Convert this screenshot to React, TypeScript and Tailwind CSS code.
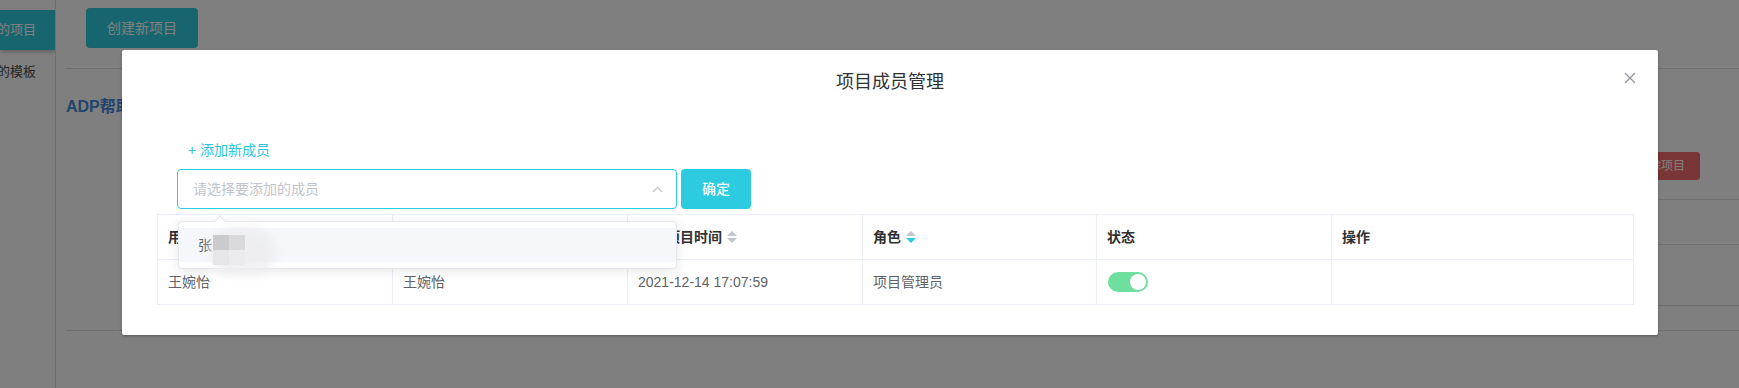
import React from "react";

function SortCaret({ active }: { active?: "up" | "down" }) {
  return (
    <span className="ml-[5px] inline-flex flex-col items-center gap-[2px]">
      <span
        className={
          "h-0 w-0 border-x-[5px] border-b-[5px] border-x-transparent " +
          (active === "up" ? "border-b-[#2ccbdf]" : "border-b-[#c0c4cc]")
        }
      />
      <span
        className={
          "h-0 w-0 border-x-[5px] border-t-[5px] border-x-transparent " +
          (active === "down" ? "border-t-[#2ccbdf]" : "border-t-[#c0c4cc]")
        }
      />
    </span>
  );
}

function HeadCell({ children }: { children: React.ReactNode }) {
  return (
    <div className="flex h-[45px] items-center border-b border-r border-[#ebeef5] pl-[10px] text-[14px] font-bold text-[#303133]">
      {children}
    </div>
  );
}

function BodyCell({ children }: { children?: React.ReactNode }) {
  return (
    <div className="flex h-[45px] items-center border-b border-r border-[#ebeef5] pl-[10px] text-[14px] text-[#606266]">
      {children}
    </div>
  );
}

export default function App() {
  return (
    <div className="relative h-[388px] w-[1739px] overflow-hidden bg-white font-['Liberation_Sans','Noto_Sans_CJK_SC',sans-serif]">
      {/* background page */}
      <div className="flex h-full">
        <aside className="h-full w-[56px] shrink-0 overflow-hidden border-r border-[#dcdfe6]">
          <div className="mt-[10px] flex h-[40px] w-[56px] items-center bg-[#2eccde] shadow-[0_2px_4px_rgba(0,0,0,0.25)]">
            <span className="ml-[-16px] whitespace-nowrap text-[13px] text-white">我的项目</span>
          </div>
          <div className="flex h-[44px] items-center">
            <span className="ml-[-16px] whitespace-nowrap text-[13px] text-[#4a4a4a]">我的模板</span>
          </div>
        </aside>
        <main className="flex-1 pl-[10px]">
          <div className="h-[69px] border-b border-[#dcdfe6] pl-[20px] pt-[8px]">
            <button className="h-[40px] w-[112px] rounded-[4px] bg-[#2eccde] text-[14px] text-white">
              创建新项目
            </button>
          </div>
          <div className="mt-[26px] text-[16px] font-bold leading-[24px] text-[#4688d6]">ADP帮助中心</div>
          <div className="mt-[33px] flex justify-end pr-[39px]">
            <button className="h-[28px] rounded-[3px] bg-[#f56c6c] px-[15px] text-[12px] text-white">删除项目</button>
          </div>
          <div className="mt-[19px]">
            <div className="ml-[80px] h-[45px] border-t border-[#dcdfe6]" />
            <div className="ml-[80px] h-[61px] border-t border-[#dcdfe6]" />
            <div className="ml-[80px] h-[25px] border-t border-[#dcdfe6]" />
            <div className="h-[1px] bg-[#dcdfe6]" />
          </div>
        </main>
      </div>

      {/* overlay */}
      <div className="absolute inset-0 bg-black/50" />

      {/* dialog */}
      <div className="absolute left-[122px] top-[50px] w-[1536px] rounded-[2px] bg-white pb-[30px] pt-[20px] shadow-[0_1px_3px_rgba(0,0,0,0.3)]">
        <div className="text-center text-[18px] leading-[24px] text-[#303133]">项目成员管理</div>
        <button className="absolute right-[20px] top-[20px] flex h-[16px] w-[16px] items-center justify-center">
          <svg width="12" height="12" viewBox="0 0 12 12">
            <path d="M1 1L11 11M11 1L1 11" stroke="#909399" strokeWidth="1.2" fill="none" />
          </svg>
        </button>

        <div className="ml-[66px] mt-[46px] text-[14px] leading-[20px] text-[#2dc5dd]">+ 添加新成员</div>

        <div className="ml-[55px] mt-[9px] flex gap-[4px]">
          <div className="relative flex h-[40px] w-[500px] items-center rounded-[4px] border border-[#2ccbdf] pl-[15px] text-[14px] text-[#c0c4cc]">
            请选择要添加的成员
            <svg className="absolute right-[13px] top-[16px]" width="11" height="7" viewBox="0 0 11 7">
              <path d="M0.8 6L5.5 1.3L10.2 6" stroke="#c0c4cc" strokeWidth="1.1" fill="none" />
            </svg>

            {/* dropdown */}
            <div className="absolute left-[0px] top-[51px] z-10 w-[499px] rounded-[4px] border border-[#e4e7ed] bg-white py-[6px] shadow-[0_2px_12px_0_rgba(0,0,0,0.1)]">
              <span className="absolute left-[37px] top-[-5px] h-[8px] w-[8px] rotate-45 border-l border-t border-[#e4e7ed] bg-white" />
              <div className="flex h-[34px] items-center bg-[#f5f7fa] px-[19px] text-[14px] text-[#606266]">张</div>
              <div className="absolute left-[30px] top-[6px] h-[46px] w-[68px] rounded-full bg-[#ededf0] opacity-80 blur-[5px]" />
              <div className="absolute left-[34px] top-[13px] grid grid-cols-[16px_16px] grid-rows-[15px_15px]">
                <span className="bg-[#cbcbcf]" />
                <span className="bg-[#dadade]" />
                <span className="bg-[#e6e6ea]" />
                <span className="bg-[#ebebef]" />
              </div>
            </div>
          </div>
          <button className="h-[40px] w-[70px] rounded-[4px] bg-[#2ccbdf] text-[14px] font-medium text-white">确定</button>
        </div>

        <div className="ml-[35px] mt-[5px] grid w-[1477px] grid-cols-[235px_235px_235px_234px_235px_302px] border-l border-t border-[#ebeef5]">
          <HeadCell>用户名</HeadCell>
          <HeadCell>姓名</HeadCell>
          <HeadCell>
            加入项目时间
            <SortCaret />
          </HeadCell>
          <HeadCell>
            角色
            <SortCaret active="down" />
          </HeadCell>
          <HeadCell>状态</HeadCell>
          <HeadCell>操作</HeadCell>

          <BodyCell>王婉怡</BodyCell>
          <BodyCell>王婉怡</BodyCell>
          <BodyCell>2021-12-14 17:07:59</BodyCell>
          <BodyCell>项目管理员</BodyCell>
          <BodyCell>
            <span className="relative ml-[1px] inline-block h-[20px] w-[40px] rounded-full bg-[#6fdf9f]">
              <span className="absolute left-[22px] top-[2px] h-[16px] w-[16px] rounded-full bg-white" />
            </span>
          </BodyCell>
          <BodyCell />
        </div>
      </div>
    </div>
  );
}
